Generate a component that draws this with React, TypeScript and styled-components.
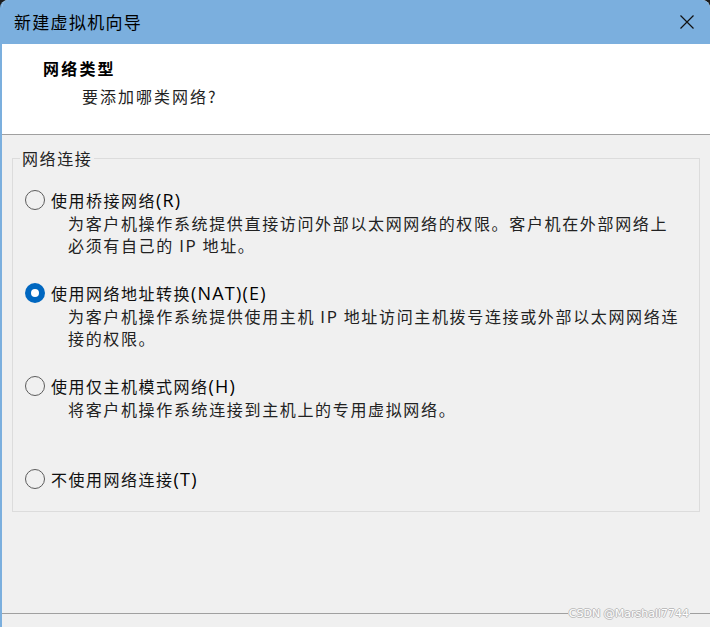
import React from "react";
import styled, { createGlobalStyle } from "styled-components";

const GlobalStyle = createGlobalStyle`
  html, body {
    margin: 0;
    padding: 0;
    background: #1c1c1c;
  }
  #root {
    width: 710px;
    height: 627px;
  }
`;

const CJK = `"Noto Sans CJK SC", "Noto Sans", sans-serif`;
const UI = `"Open Sans", "Noto Sans CJK SC", sans-serif`;

const Window = styled.div`
  width: 710px;
  height: 627px;
  box-sizing: border-box;
  display: flex;
  flex-direction: column;
  background: #f0f0f0;
  border-left: 2px solid #7bafde;
  border-radius: 8px 8px 0 0;
  overflow: hidden;
  position: relative;
  font-family: ${CJK};
`;

const TitleBar = styled.div`
  height: 44px;
  flex: none;
  display: flex;
  align-items: center;
  justify-content: space-between;
  padding: 0 16px 0 12px;
  background: #7bafde;
  color: #000;
`;

const TitleText = styled.span`
  font-family: ${CJK};
  font-size: 17px;
  letter-spacing: 1.3px;
  line-height: 24px;
`;

const CloseButton = styled.div`
  width: 14px;
  height: 14px;
  display: flex;
`;

const Header = styled.div`
  flex: none;
  box-sizing: border-box;
  height: 91px;
  background: #ffffff;
  border-bottom: 1px solid #a0a0a0;
  padding: 12px 0 0 41px;
`;

const HeaderTitle = styled.div`
  font-family: ${CJK};
  font-weight: 700;
  font-size: 16px;
  letter-spacing: 2.2px;
  line-height: 24px;
  color: #000;
`;

const HeaderSub = styled.div`
  margin-top: 4px;
  padding-left: 39px;
  font-family: ${CJK};
  font-size: 16px;
  letter-spacing: 2px;
  line-height: 24px;
  color: #222;
`;

const Body = styled.div`
  flex: 1;
  padding: 11px 10px 0 10px;
`;

const GroupBox = styled.fieldset`
  margin: 0;
  padding: 0;
  border: 1px solid #dcdcdc;
  min-width: 0;
`;

const GroupLegend = styled.legend`
  margin-left: 7px;
  padding: 0 2px;
  font-family: ${CJK};
  font-size: 16px;
  letter-spacing: 1.6px;
  line-height: 24px;
  color: #222;
`;

const GroupContent = styled.div`
  padding: 18px 12px 20px 12px;
  display: flex;
  flex-direction: column;
  gap: 25px;
`;

const Option = styled.div`
  display: flex;
  flex-direction: column;
`;

const OptionRow = styled.div`
  display: flex;
  align-items: center;
  gap: 6px;
  height: 24px;
`;

const Radio = styled.span<{ $checked?: boolean }>`
  width: 20px;
  height: 20px;
  box-sizing: border-box;
  border-radius: 50%;
  flex: none;
  display: flex;
  align-items: center;
  justify-content: center;
  border: ${(p) => (p.$checked ? "none" : "1px solid #5c5c5c")};
  background: ${(p) => (p.$checked ? "#0067c0" : "transparent")};
  &::after {
    content: "";
    display: ${(p) => (p.$checked ? "block" : "none")};
    width: 8px;
    height: 8px;
    border-radius: 50%;
    background: #ffffff;
  }
`;

const OptionLabel = styled.span`
  font-family: ${CJK};
  font-size: 16px;
  letter-spacing: 1.5px;
  line-height: 22px;
  color: #111;
  white-space: nowrap;
`;

const Mnemonic = styled.span`
  font-family: ${UI};
  font-size: 18px;
  letter-spacing: 1.2px;
  color: #000;
`;

const Description = styled.div<{ $lines?: number }>`
  padding-left: 43px;
  font-family: ${CJK};
  font-size: 16px;
  letter-spacing: 1.65px;
  line-height: 22px;
  color: #222;
  white-space: nowrap;
  min-height: ${(p) => (p.$lines ?? 1) * 22}px;
`;

const Footer = styled.div`
  height: 14px;
  flex: none;
  box-sizing: border-box;
  border-top: 1px solid #a0a0a0;
`;

const Watermark = styled.span`
  position: absolute;
  right: 20px;
  bottom: 6px;
  font-family: "DejaVu Sans", sans-serif;
  font-size: 11px;
  line-height: 14px;
  color: #ffffff;
  background: #f0f0f0;
  padding: 0 1px;
  text-shadow: 1px 0 #bcbcbc, -1px 0 #bcbcbc, 0 1px #bcbcbc, 0 -1px #bcbcbc;
`;

type OptionData = {
  label: string;
  key: string;
  checked?: boolean;
  lines: string[];
  minLines?: number;
};

const options: OptionData[] = [
  {
    label: "使用桥接网络",
    key: "(R)",
    lines: [
      "为客户机操作系统提供直接访问外部以太网网络的权限。客户机在外部网络上",
      "必须有自己的 IP 地址。",
    ],
  },
  {
    label: "使用网络地址转换",
    key: "(NAT)(E)",
    checked: true,
    lines: [
      "为客户机操作系统提供使用主机 IP 地址访问主机拨号连接或外部以太网网络连",
      "接的权限。",
    ],
  },
  {
    label: "使用仅主机模式网络",
    key: "(H)",
    lines: ["将客户机操作系统连接到主机上的专用虚拟网络。"],
    minLines: 2,
  },
  {
    label: "不使用网络连接",
    key: "(T)",
    lines: [],
  },
];

export default function App() {
  return (
    <>
      <GlobalStyle />
      <Window>
        <TitleBar>
          <TitleText>新建虚拟机向导</TitleText>
          <CloseButton>
            <svg width="14" height="14" viewBox="0 0 14 14">
              <path d="M0.5 0.5 L13.5 13.5 M13.5 0.5 L0.5 13.5" stroke="#111" strokeWidth="1.2" fill="none" />
            </svg>
          </CloseButton>
        </TitleBar>
        <Header>
          <HeaderTitle>网络类型</HeaderTitle>
          <HeaderSub>要添加哪类网络?</HeaderSub>
        </Header>
        <Body>
          <GroupBox>
            <GroupLegend>网络连接</GroupLegend>
            <GroupContent>
              {options.map((o) => (
                <Option key={o.label}>
                  <OptionRow>
                    <Radio $checked={o.checked} />
                    <OptionLabel>
                      {o.label}
                      <Mnemonic>{o.key}</Mnemonic>
                    </OptionLabel>
                  </OptionRow>
                  {o.lines.length > 0 && (
                    <Description $lines={o.minLines ?? o.lines.length}>
                      {o.lines.map((l, i) => (
                        <div key={i}>{l}</div>
                      ))}
                    </Description>
                  )}
                </Option>
              ))}
            </GroupContent>
          </GroupBox>
        </Body>
        <Footer />
        <Watermark>CSDN @Marshall7744</Watermark>
      </Window>
    </>
  );
}
